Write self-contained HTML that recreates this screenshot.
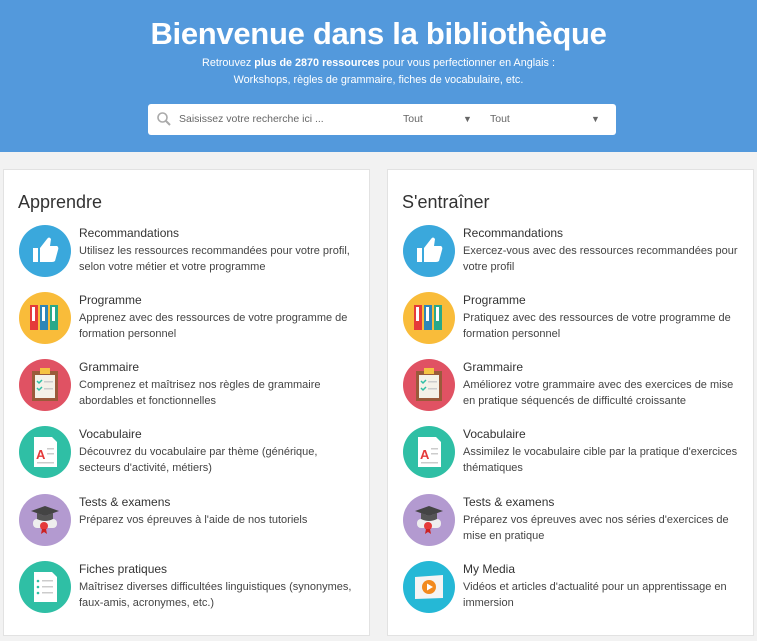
<!DOCTYPE html>
<html><head><meta charset="utf-8"><style>
*{margin:0;padding:0;box-sizing:border-box}
body{width:757px;height:641px;background:#f2f2f2;font-family:"Liberation Sans",sans-serif;position:relative;overflow:hidden;color:#333}
.hd{position:absolute;left:0;top:0;width:757px;height:152px;background:#5399dc;color:#fff;text-align:center}
.hd h1{position:absolute;top:16px;width:100%;font-size:31px;font-weight:bold;letter-spacing:-0.3px}
.hd .s{position:absolute;width:100%;font-size:10.8px}
.sb{position:absolute;left:148px;top:104px;width:468px;height:31px;background:#fff;border-radius:3px;font-size:10.5px;color:#666}
.sb span{position:absolute;top:9px}
.card{position:absolute;top:169px;width:367px;height:467px;background:#fff;border:1px solid #e2e2e2}
.card h2{position:absolute;left:14px;top:22px;font-size:18px;font-weight:normal;color:#333}
.it{position:absolute;left:15px;width:345px;height:54px}
.ic{position:absolute;left:0;top:0;width:52px;height:52px;border-radius:50%}
.ic svg{width:52px;height:52px}
.t{position:absolute;left:60px;top:1px;font-size:12px;color:#333}
.d{position:absolute;left:60px;top:18px;font-size:11px;line-height:16px;color:#444;white-space:nowrap}
</style></head><body>
<div class="hd">
<h1>Bienvenue dans la bibliothèque</h1>
<div class="s" style="top:57px">Retrouvez <b>plus de 2870 ressources</b> pour vous perfectionner en Anglais :</div>
<div class="s" style="top:74px">Workshops, règles de grammaire, fiches de vocabulaire, etc.</div>
<div class="sb">
<svg style="position:absolute;left:8px;top:7px" width="16" height="16" viewBox="0 0 16 16"><circle cx="6.5" cy="6.5" r="4.5" fill="none" stroke="#aaa" stroke-width="1.6"/><line x1="10" y1="10" x2="14" y2="14" stroke="#aaa" stroke-width="2"/></svg>
<span style="left:31px">Saisissez votre recherche ici ...</span>
<span style="left:255px">Tout</span><span style="left:315px;font-size:9px;top:10px">▼</span>
<span style="left:342px">Tout</span><span style="left:443px;font-size:9px;top:10px">▼</span>
</div>
</div>

<div class="card" style="left:3px">
<h2>Apprendre</h2>
<div class="it" style="top:55px"><div class="ic" style="background:#3aa8dc"><svg viewBox="0 0 52 52"><rect x="14" y="23" width="5" height="14" fill="#fff"/><path d="M21 23 L28 14 Q30 11 32 14 L31 21 L38 21 Q40 22 39 25 L36 36 Q35 37 33 37 L21 37 Z" fill="#fff"/></svg></div><div class="t">Recommandations</div><div class="d">Utilisez les ressources recommandées pour votre profil,<br>selon votre métier et votre programme</div></div>
<div class="it" style="top:122px"><div class="ic" style="background:#f9bc3a"><svg viewBox="0 0 52 52"><rect x="11" y="13" width="8" height="25" fill="#e53a3a"/><rect x="21" y="13" width="8" height="25" fill="#2e86b8"/><rect x="31" y="13" width="8" height="25" fill="#2aa88a"/><rect x="13" y="15" width="3" height="14" fill="#fff"/><rect x="23" y="15" width="3" height="14" fill="#fff"/><rect x="33" y="15" width="3" height="14" fill="#fff"/></svg></div><div class="t">Programme</div><div class="d">Apprenez avec des ressources de votre programme de<br>formation personnel</div></div>
<div class="it" style="top:189px"><div class="ic" style="background:#e05263"><svg viewBox="0 0 52 52"><rect x="13" y="12" width="26" height="30" fill="#9a5a3a"/><rect x="16" y="16" width="20" height="23" fill="#f4f1e8"/><rect x="21" y="9" width="10" height="6" fill="#f5c342"/><path d="M18 22l2 2 3-3M18 29l2 2 3-3" stroke="#2fbfa5" stroke-width="1.5" fill="none"/><rect x="25" y="22" width="9" height="1.5" fill="#ccc"/><rect x="25" y="29" width="9" height="1.5" fill="#ccc"/></svg></div><div class="t">Grammaire</div><div class="d">Comprenez et maîtrisez nos règles de grammaire<br>abordables et fonctionnelles</div></div>
<div class="it" style="top:256px"><div class="ic" style="background:#2fbfa5"><svg viewBox="0 0 52 52"><path d="M15 11 L33 11 L38 16 L38 41 L15 41 Z" fill="#fff"/><text x="17" y="33" font-size="13" font-weight="bold" fill="#e53a3a" font-family="Liberation Sans">A</text><rect x="28" y="22" width="7" height="1.5" fill="#ccc"/><rect x="28" y="27" width="7" height="1.5" fill="#ccc"/><rect x="18" y="36" width="17" height="1.5" fill="#ccc"/></svg></div><div class="t">Vocabulaire</div><div class="d">Découvrez du vocabulaire par thème (générique,<br>secteurs d'activité, métiers)</div></div>
<div class="it" style="top:324px"><div class="ic" style="background:#b39ad0"><svg viewBox="0 0 52 52"><rect x="14" y="25" width="24" height="9" rx="4" fill="#eee"/><path d="M12 17 L26 12 L40 17 L26 22 Z" fill="#444"/><path d="M18 19 L18 25 Q26 29 34 25 L34 19 L26 22 Z" fill="#555"/><circle cx="25" cy="32" r="4" fill="#e53a3a"/><path d="M23 35 L22 40 L25 38 L28 40 L27 35Z" fill="#c22"/></svg></div><div class="t">Tests &amp; examens</div><div class="d">Préparez vos épreuves à l'aide de nos tutoriels</div></div>
<div class="it" style="top:391px"><div class="ic" style="background:#2fbfa5"><svg viewBox="0 0 52 52"><path d="M15 11 L33 11 L38 16 L38 41 L15 41 Z" fill="#fff"/><circle cx="19" cy="20" r="1.3" fill="#2fbfa5"/><circle cx="19" cy="26" r="1.3" fill="#2fbfa5"/><circle cx="19" cy="32" r="1.3" fill="#2fbfa5"/><rect x="23" y="19" width="11" height="1.5" fill="#ccc"/><rect x="23" y="25" width="11" height="1.5" fill="#ccc"/><rect x="23" y="31" width="11" height="1.5" fill="#ccc"/></svg></div><div class="t">Fiches pratiques</div><div class="d">Maîtrisez diverses difficultées linguistiques (synonymes,<br>faux-amis, acronymes, etc.)</div></div>
</div>

<div class="card" style="left:387px">
<h2>S'entraîner</h2>
<div class="it" style="top:55px"><div class="ic" style="background:#3aa8dc"><svg viewBox="0 0 52 52"><rect x="14" y="23" width="5" height="14" fill="#fff"/><path d="M21 23 L28 14 Q30 11 32 14 L31 21 L38 21 Q40 22 39 25 L36 36 Q35 37 33 37 L21 37 Z" fill="#fff"/></svg></div><div class="t">Recommandations</div><div class="d">Exercez-vous avec des ressources recommandées pour<br>votre profil</div></div>
<div class="it" style="top:122px"><div class="ic" style="background:#f9bc3a"><svg viewBox="0 0 52 52"><rect x="11" y="13" width="8" height="25" fill="#e53a3a"/><rect x="21" y="13" width="8" height="25" fill="#2e86b8"/><rect x="31" y="13" width="8" height="25" fill="#2aa88a"/><rect x="13" y="15" width="3" height="14" fill="#fff"/><rect x="23" y="15" width="3" height="14" fill="#fff"/><rect x="33" y="15" width="3" height="14" fill="#fff"/></svg></div><div class="t">Programme</div><div class="d">Pratiquez avec des ressources de votre programme de<br>formation personnel</div></div>
<div class="it" style="top:189px"><div class="ic" style="background:#e05263"><svg viewBox="0 0 52 52"><rect x="13" y="12" width="26" height="30" fill="#9a5a3a"/><rect x="16" y="16" width="20" height="23" fill="#f4f1e8"/><rect x="21" y="9" width="10" height="6" fill="#f5c342"/><path d="M18 22l2 2 3-3M18 29l2 2 3-3" stroke="#2fbfa5" stroke-width="1.5" fill="none"/><rect x="25" y="22" width="9" height="1.5" fill="#ccc"/><rect x="25" y="29" width="9" height="1.5" fill="#ccc"/></svg></div><div class="t">Grammaire</div><div class="d">Améliorez votre grammaire avec des exercices de mise<br>en pratique séquencés de difficulté croissante</div></div>
<div class="it" style="top:256px"><div class="ic" style="background:#2fbfa5"><svg viewBox="0 0 52 52"><path d="M15 11 L33 11 L38 16 L38 41 L15 41 Z" fill="#fff"/><text x="17" y="33" font-size="13" font-weight="bold" fill="#e53a3a" font-family="Liberation Sans">A</text><rect x="28" y="22" width="7" height="1.5" fill="#ccc"/><rect x="28" y="27" width="7" height="1.5" fill="#ccc"/><rect x="18" y="36" width="17" height="1.5" fill="#ccc"/></svg></div><div class="t">Vocabulaire</div><div class="d">Assimilez le vocabulaire cible par la pratique d'exercices<br>thématiques</div></div>
<div class="it" style="top:324px"><div class="ic" style="background:#b39ad0"><svg viewBox="0 0 52 52"><rect x="14" y="25" width="24" height="9" rx="4" fill="#eee"/><path d="M12 17 L26 12 L40 17 L26 22 Z" fill="#444"/><path d="M18 19 L18 25 Q26 29 34 25 L34 19 L26 22 Z" fill="#555"/><circle cx="25" cy="32" r="4" fill="#e53a3a"/><path d="M23 35 L22 40 L25 38 L28 40 L27 35Z" fill="#c22"/></svg></div><div class="t">Tests &amp; examens</div><div class="d">Préparez vos épreuves avec nos séries d'exercices de<br>mise en pratique</div></div>
<div class="it" style="top:391px"><div class="ic" style="background:#25b8d6"><svg viewBox="0 0 52 52"><path d="M12 16 L40 14 L40 37 L12 38 Z" fill="#f4f4f4"/><circle cx="26" cy="26" r="7" fill="#f28a1e"/><path d="M24 22.5 L30 26 L24 29.5Z" fill="#fff"/></svg></div><div class="t">My Media</div><div class="d">Vidéos et articles d'actualité pour un apprentissage en<br>immersion</div></div>
</div>
</body></html>
